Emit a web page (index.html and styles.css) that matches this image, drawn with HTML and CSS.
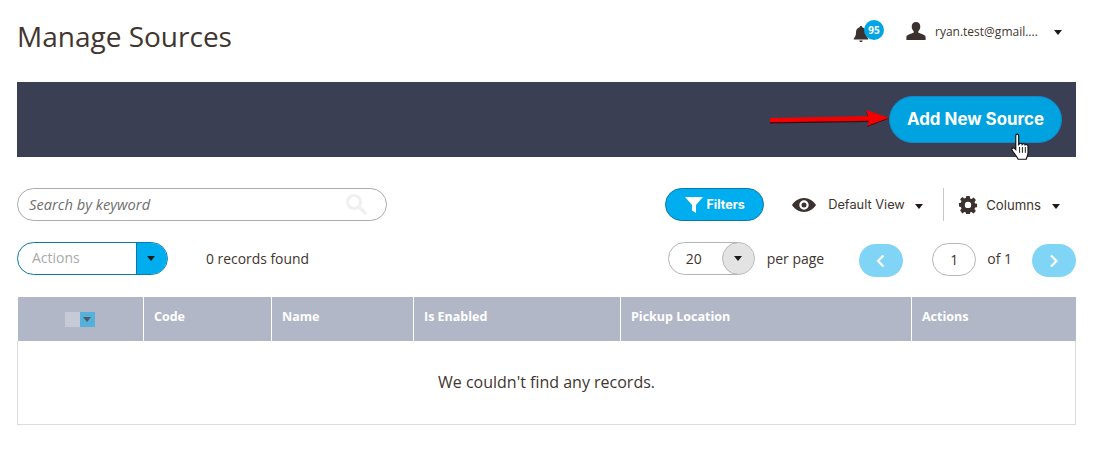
FILE: index.html
```html
<!DOCTYPE html>
<html lang="en">
<head>
    <meta charset="UTF-8">
    <title>Manage Sources</title>
    <link rel="stylesheet" href="styles.css">
</head>
<body>
    <div class="page">
        <header class="top">
            <h1>Manage Sources</h1>
            <div class="top-right">
                <div class="bell">
                    <svg width="16" height="18" viewBox="0 0 16 18"><path fill="#3b3230" d="M8 1c-.8 0-1.3.5-1.3 1.2C4.300 2.800 3 4.800 3 7.300c0 3-.6 4.600-2.200 6V14.500h14.400V13.300C13.600 11.900 13 10.300 13 7.300c0-2.500-1.300-4.500-3.700-5.100C9.300 1.500 8.800 1 8 1z"/><path fill="#3b3230" d="M6.300 15.500h3.400C9.600 16.500 8.900 17 8 17s-1.600-.5-1.700-1.500z"/></svg>
                    <span class="badge">95</span>
                </div>
                <div class="user">
                    <svg width="20" height="18" viewBox="0 0 20 18"><path fill="#3b3230" d="M10 0c2.700 0 4.300 2 4.300 4.600 0 2-.8 3.700-2 4.700v1.500c2.500 1 6.300 1.700 7.300 3.600V18H.4v-3.600c1-1.900 4.800-2.600 7.300-3.600V9.300c-1.200-1-2-2.700-2-4.700C5.700 2 7.300 0 10 0z"/></svg>
                    <span class="user-name">ryan.test@gmail....</span>
                    <span class="caret"></span>
                </div>
            </div>
        </header>

        <div class="action-bar">
            <button class="add-btn">Add New Source</button>
        </div>

        <div class="toolbar">
            <div class="search">
                <span>Search by keyword</span>
                <svg width="22" height="22" viewBox="0 0 22 22"><circle cx="9" cy="9" r="6.500" fill="none" stroke="#f0f0f0" stroke-width="3"/><path d="M14 14l6 6" stroke="#f0f0f0" stroke-width="3.500" stroke-linecap="round"/></svg>
            </div>
            <div class="tools">
                <button class="filters">
                    <svg width="18" height="16" viewBox="0 0 18 16"><path fill="#fff" d="M0 0h18L11 8v8L7 13.500V8z"/></svg>
                    Filters
                </button>
                <div class="view">
                    <svg width="24" height="14" viewBox="0 0 24 14"><path fill="#3b3230" fill-rule="evenodd" d="M12 0c5 0 9.500 3 12 7-2.500 4-7 7-12 7S2.500 11 0 7c2.500-4 7-7 12-7zm0 2.300a4.700 4.700 0 1 0 0 9.400 4.700 4.700 0 0 0 0-9.400z"/><circle cx="12" cy="7" r="2.500" fill="#3b3230"/></svg>
                    <span class="view-name">Default View</span>
                    <span class="caret"></span>
                </div>
                <div class="columns">
                    <svg width="18" height="18" viewBox="0 0 18 18"><path fill="#3b3230" fill-rule="evenodd" d="M7.300 0h3.400l.4 2.400 1.500.6 2-1.400 2.300 2.400-1.400 2 .6 1.400 2.400.4v3.400l-2.400.4-.6 1.500 1.400 2-2.400 2.300-2-1.400-1.400.6-.4 2.400H7.300l-.4-2.400-1.500-.6-2 1.400L1.100 14.400l1.400-2-.6-1.500L-.5 10.500V7.100l2.400-.4.600-1.400-1.400-2L3.400 1l2 1.400 1.500-.6zM9 5.700a3.200 3.200 0 1 0 0 6.400 3.200 3.200 0 0 0 0-6.400z"/></svg>
                    <span class="columns-name">Columns</span>
                    <span class="caret"></span>
                </div>
            </div>
        </div>

        <div class="toolbar second">
            <div class="left-tools">
                <div class="actions">
                    <span class="actions-label">Actions</span>
                    <span class="actions-toggle"><span class="caret"></span></span>
                </div>
                <span class="records">0 records found</span>
            </div>
            <div class="paging">
                <div class="per-page">
                    <span class="per-value">20</span>
                    <span class="per-toggle"><span class="caret"></span></span>
                </div>
                <span class="per-label">per page</span>
                <button class="page-btn prev"><svg width="10" height="14" viewBox="0 0 10 14"><path d="M7.500 1.500L2 7 7.500 12.500" fill="none" stroke="#fff" stroke-width="2.200"/></svg></button>
                <span class="page-num">1</span>
                <span class="page-of">of 1</span>
                <button class="page-btn next"><svg width="10" height="14" viewBox="0 0 10 14"><path d="M2 1.500L7.500 7 2 12.500" fill="none" stroke="#fff" stroke-width="2.200"/></svg></button>
            </div>
        </div>

        <table class="grid">
            <thead>
                <tr>
                    <th class="col-check"><span class="check"><span class="check-box"></span><span class="check-arrow"></span></span></th>
                    <th class="col-code">Code</th>
                    <th class="col-name">Name</th>
                    <th class="col-enabled">Is Enabled</th>
                    <th class="col-pickup">Pickup Location</th>
                    <th>Actions</th>
                </tr>
            </thead>
            <tbody>
                <tr><td colspan="6">We couldn't find any records.</td></tr>
            </tbody>
        </table>

        <svg class="arrow" width="124" height="24" viewBox="0 0 124 24"><path fill="#3a0a12" d="M1 14.500L99 12.500 97 6 120 13.500 98 22 100 17 1 18.500z"/><path fill="#f20000" d="M1 13L99 11 97 5 120 12.700 98 21 100 15.700 1 17.300z"/></svg>
        <svg class="hand" width="22" height="28" viewBox="0 0 18 24"><path fill="#fff" stroke="#111" stroke-width="1" d="M4.500 2.500c0-2 2.500-2 2.500 0V10l.5-.5c.5-1 2.300-1 2.500.3.500-.8 2.300-.8 2.500.4.700-.6 2.300-.3 2.500 1v5.800c0 2.500-1 3.500-1.500 5.500H6.500C5.800 20.500 3.500 18 1.500 15c-1-1.500.5-3 2-1.800l1 1z"/><path stroke="#111" stroke-width=".8" d="M7.800 12v5M10.200 12v5M12.700 12v5"/></svg>
    </div>
</body>
</html>
```

FILE: styles.css
```css
* {
    box-sizing: border-box;
}
body {
    margin: 0;
    font-family: "Open Sans", sans-serif;
    color: #41362f;
    background: #fff;
}
button {
    font-family: inherit;
    border: none;
    padding: 0;
}
.page {
    position: relative;
    width: 1096px;
    height: 450px;
    padding: 0 20px 0 17px;
    overflow: hidden;
}
.top {
    display: flex;
    justify-content: space-between;
    height: 82px;
}
h1 {
    margin: 17px 0 0;
    font-size: 28px;
    line-height: 38px;
    font-weight: 400;
}
.top-right {
    display: flex;
    align-items: flex-start;
    padding: 21px 14px 0 0;
}
.bell {
    position: relative;
    width: 32px;
    height: 22px;
    padding-top: 4px;
}
.badge {
    position: absolute;
    left: 11px;
    top: -1px;
    width: 20px;
    height: 20px;
    border-radius: 50%;
    background: #00a5e3;
    color: #fff;
    font-size: 10px;
    font-weight: 700;
    line-height: 20px;
    text-align: center;
}
.user {
    display: flex;
    align-items: center;
    margin-left: 21px;
    height: 20px;
}
.user-name {
    margin-left: 9px;
    font-size: 12px;
    width: 119px;
    white-space: nowrap;
}
.caret {
    display: inline-block;
    width: 0;
    height: 0;
    border-left: 4px solid transparent;
    border-right: 4px solid transparent;
    border-top: 5px solid #1f1a18;
}
.user .caret,
.view .caret,
.columns .caret {
    margin-top: 3px;
}
.action-bar {
    display: flex;
    justify-content: flex-end;
    align-items: center;
    height: 75px;
    padding-right: 14px;
    background: #3b3f54;
}
.add-btn {
    width: 173px;
    height: 47px;
    padding-bottom: 2px;
    border-radius: 24px;
    border: 1px solid #1287c9;
    background: #00a2df;
    color: #fff;
    font-family: "Inter", sans-serif;
    font-size: 16.900px;
    font-weight: 700;
}
.toolbar {
    display: flex;
    justify-content: space-between;
    align-items: center;
    margin-top: 31px;
    height: 33px;
}
.search {
    display: flex;
    justify-content: space-between;
    align-items: center;
    width: 370px;
    height: 33px;
    padding: 0 19px 2px 11px;
    border: 1px solid #ababab;
    border-radius: 17px;
    font-size: 14.700px;
    font-style: italic;
    color: #6f6f6f;
}
.tools {
    display: flex;
    align-items: center;
    padding-right: 16px;
}
.filters {
    display: flex;
    align-items: center;
    justify-content: center;
    gap: 4px;
    width: 99px;
    height: 33px;
    border-radius: 17px;
    border: 1px solid #0a78a8;
    background: #00adee;
    color: #fff;
    font-family: "Inter", sans-serif;
    font-size: 12.500px;
    font-weight: 700;
}
.view {
    display: flex;
    align-items: center;
    margin-left: 28px;
    width: 152px;
    height: 33px;
    border-right: 1px solid #c8c8c8;
    font-family: "Inter", sans-serif;
    font-size: 12.800px;
}
.view-name {
    margin: 0 10px 0 12px;
}
.columns {
    display: flex;
    align-items: center;
    padding-left: 15px;
    font-family: "Inter", sans-serif;
    font-size: 13.200px;
}
.columns-name {
    margin: 0 11px 0 9px;
}
.second {
    margin-top: 21px;
}
.left-tools {
    display: flex;
    align-items: center;
}
.actions {
    display: flex;
    width: 151px;
    height: 33px;
    border: 1px solid #0a78a8;
    border-radius: 17px;
    overflow: hidden;
}
.actions-label {
    flex: 1;
    padding-left: 14px;
    font-size: 14px;
    line-height: 29px;
    color: #a9a9a9;
}
.actions-toggle {
    display: flex;
    align-items: center;
    justify-content: center;
    width: 31px;
    padding-right: 2px;
    border-left: 1px solid #0a78a8;
    background: #00adee;
}
.records {
    margin-left: 38px;
    font-size: 13.900px;
}
.paging {
    display: flex;
    align-items: center;
    font-size: 14px;
}
.per-page {
    display: flex;
    justify-content: space-between;
    align-items: center;
    width: 87px;
    height: 33px;
    border: 1px solid #b5b5b5;
    border-radius: 17px;
    overflow: hidden;
}
.per-value {
    padding-left: 17px;
}
.per-toggle {
    display: flex;
    align-items: center;
    justify-content: center;
    width: 33px;
    height: 33px;
    border: 1px solid #b5b5b5;
    border-radius: 50%;
    background: #e3e3e3;
    margin-right: -1px;
}
.per-label {
    margin: 0 35px 0 12px;
}
.page-btn {
    display: flex;
    align-items: center;
    justify-content: center;
    width: 44px;
    height: 33px;
    margin-top: 4px;
    border-radius: 17px;
    background: #80d5f7;
}
.page-num {
    width: 44px;
    height: 33px;
    margin: 2px 0 0 29px;
    border: 1px solid #b5b5b5;
    border-radius: 17px;
    line-height: 31px;
    text-align: center;
}
.page-of {
    margin: 0 20px 0 11px;
}
.grid {
    width: 1059px;
    margin-top: 22px;
    border-collapse: collapse;
    table-layout: fixed;
}
.grid th {
    height: 44px;
    padding: 0 10px 6px;
    background: #b2b7c8;
    border-left: 1px solid #fff;
    color: #fff;
    font-size: 12.500px;
    font-weight: 700;
    text-align: left;
}
.grid th:first-child {
    border-left: none;
}
.col-check {
    width: 126px;
}
.col-code {
    width: 128px;
}
.col-name {
    width: 142px;
}
.col-enabled {
    width: 207px;
}
.col-pickup {
    width: 291px;
}
.grid .col-check {
    padding: 0;
}
.check {
    display: flex;
    justify-content: center;
}
.check-box {
    width: 15px;
    height: 15px;
    background: #c6cad6;
}
.check-arrow {
    position: relative;
    width: 15px;
    height: 15px;
    background: #56b0dc;
}
.check-arrow::after {
    content: "";
    position: absolute;
    left: 3px;
    top: 5px;
    border-left: 4px solid transparent;
    border-right: 4px solid transparent;
    border-top: 5px solid #4d5a66;
}
.grid td {
    height: 83px;
    border: 1px solid #dcdcdc;
    border-top: none;
    font-size: 16px;
    text-align: center;
}
.arrow {
    position: absolute;
    left: 769px;
    top: 105px;
}
.hand {
    position: absolute;
    left: 1010px;
    top: 133px;
}
```
